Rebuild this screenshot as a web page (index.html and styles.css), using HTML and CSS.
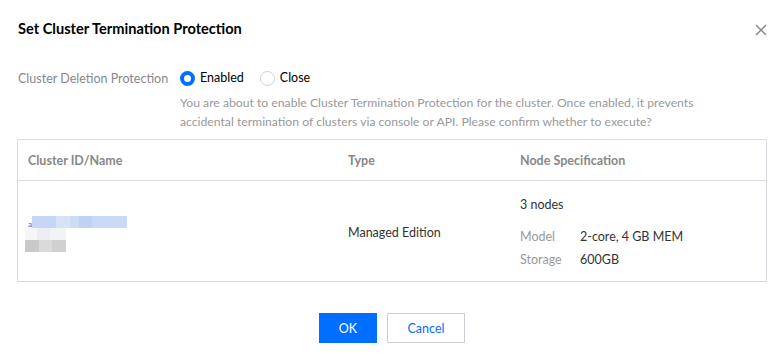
FILE: index.html
```html
<!DOCTYPE html>
<html lang="en">
<head>
    <meta charset="UTF-8">
    <meta name="viewport" content="width=device-width, initial-scale=1.0">
    <title>Set Cluster Termination Protection</title>
    <link rel="stylesheet" href="styles.css">
</head>
<body>
    <div class="dialog">
        <div class="dialog-header">
            <h2 class="dialog-title">Set Cluster Termination Protection</h2>
            <button class="close-btn" aria-label="Close">
                <svg width="12" height="12" viewBox="0 0 12 12"><path d="M1 1L11 11M11 1L1 11" stroke="#888" stroke-width="1.5"/></svg>
            </button>
        </div>
        <div class="form-row">
            <div class="form-label">Cluster Deletion Protection</div>
            <div class="form-control">
                <div class="radio-group">
                    <label class="radio"><span class="radio-dot checked"></span>Enabled</label>
                    <label class="radio"><span class="radio-dot"></span>Close</label>
                </div>
                <p class="form-help">You are about to enable Cluster Termination Protection for the cluster. Once enabled, it prevents accidental termination of clusters via console or API. Please confirm whether to execute?</p>
            </div>
        </div>
        <table class="cluster-table">
            <thead>
                <tr>
                    <th class="col-id">Cluster ID/Name</th>
                    <th class="col-type">Type</th>
                    <th>Node Specification</th>
                </tr>
            </thead>
            <tbody>
                <tr>
                    <td>
                        <div class="masked-id"><span class="masked-letter">a</span><span class="masked-bar"></span></div>
                        <div class="masked-name"><span></span><span></span></div>
                    </td>
                    <td>Managed Edition</td>
                    <td>
                        <div class="node-count">3 nodes</div>
                        <div class="spec-row"><span class="spec-key">Model</span><span>2-core, 4 GB MEM</span></div>
                        <div class="spec-row"><span class="spec-key">Storage</span><span>600GB</span></div>
                    </td>
                </tr>
            </tbody>
        </table>
        <div class="dialog-footer">
            <button class="btn btn-primary">OK</button>
            <button class="btn btn-default">Cancel</button>
        </div>
    </div>
</body>
</html>
```

FILE: styles.css
```css
body {
    margin: 0;
    background: #fff;
    font-family: Lato, "Liberation Sans", sans-serif;
    font-size: 12.5px;
    color: #333;
}
.dialog {
    padding: 0 17px 0 17px;
}
.dialog-header {
    display: flex;
    justify-content: space-between;
    align-items: center;
    padding: 18px 0 0 1px;
    height: 22px;
}
.dialog-title {
    margin: 0;
    font-size: 14.6px;
    font-weight: 700;
    color: #000;
    line-height: 22px;
}
.close-btn {
    border: none;
    background: none;
    padding: 0;
    margin-right: 0;
    margin-top: 2px;
    width: 12px;
    height: 12px;
    cursor: pointer;
    display: flex;
}
.form-row {
    display: flex;
    margin-top: 28px;
    padding-left: 1px;
}
.form-label {
    width: 162px;
    color: #888;
    line-height: 20px;
    padding-top: 1px;
}
.form-control {
    flex: 1;
}
.radio-group {
    display: flex;
    gap: 16px;
    height: 20px;
    align-items: center;
}
.radio {
    display: flex;
    align-items: center;
    gap: 5px;
    color: #000;
    line-height: 20px;
}
.radio-dot {
    width: 15px;
    height: 15px;
    box-sizing: border-box;
    border: 1px solid #ccd0d6;
    border-radius: 50%;
    background: #fff;
}
.radio-dot.checked {
    border: 4px solid #006eff;
}
.form-help {
    margin: 5px 0 0 0;
    color: #999;
    font-size: 12.2px;
    line-height: 19px;
    max-width: 530px;
}
.cluster-table {
    width: 100%;
    margin-top: 8px;
    border-collapse: collapse;
    border: 1px solid #d9dde3;
}
.cluster-table th {
    text-align: left;
    font-weight: 700;
    color: #888;
    height: 40px;
    padding: 0 10px;
    border-bottom: 1px solid #d9dde3;
}
.col-id {
    width: 300px;
}
.col-type {
    width: 152px;
}
.cluster-table td {
    height: 97px;
    padding: 3px 10px 0 10px;
    vertical-align: middle;
}
.masked-id {
    display: flex;
    align-items: center;
    height: 12px;
    margin-top: 2px;
}
.masked-letter {
    color: #006eff;
    font-size: 8px;
    line-height: 8px;
    margin-top: 4px;
}
.masked-bar {
    width: 95px;
    height: 12px;
    background: linear-gradient(90deg, #c6d7f5 0 25%, #d7e2f7 25% 40%, #cddcf5 40% 50%, #bfd2f3 50% 63%, #c8daf5 63%);
}
.masked-name {
    display: grid;
    grid-template-rows: 12px 12px;
    margin-left: -3px;
    width: 41px;
}
.masked-name span:nth-child(1) {
    background: linear-gradient(90deg, #f6f6f7 0 30%, #eceef1 30% 60%, #f2f3f4 60%);
}
.masked-name span:nth-child(2) {
    background: linear-gradient(90deg, #c9c9c9 0 33%, #dadada 33% 66%, #d0d0d0 66%);
}
.node-count {
    margin-bottom: 12px;
    line-height: 20px;
}
.spec-row {
    display: flex;
    line-height: 20px;
    margin-top: 3px;
}
.spec-key {
    width: 60px;
    color: #999;
}
.dialog-footer {
    display: flex;
    justify-content: center;
    gap: 10px;
    margin-top: 31px;
}
.btn {
    height: 30px;
    font-family: inherit;
    font-size: 12.5px;
    cursor: pointer;
    padding: 0;
}
.btn-primary {
    width: 58px;
    background: #006eff;
    border: 1px solid #006eff;
    color: #fff;
}
.btn-default {
    width: 78px;
    background: #fff;
    border: 1px solid #ccd0d6;
    color: #006eff;
}
```
